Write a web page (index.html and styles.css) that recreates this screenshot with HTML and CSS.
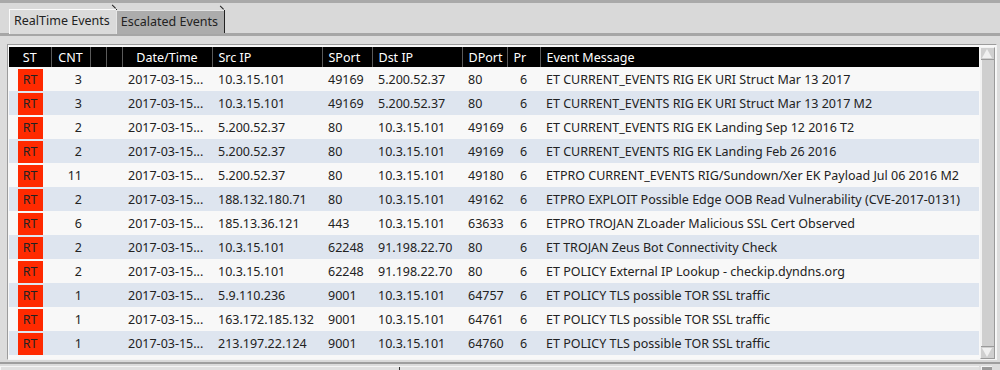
FILE: index.html
```html
<!DOCTYPE html>
<html lang="en">
<head>
  <meta charset="UTF-8">
  <title>Events</title>
  <link rel="stylesheet" href="styles.css">
</head>
<body>
  <div class="window">
    <div class="tabbar">
      <div class="tab active">RealTime Events</div>
      <div class="tab">Escalated Events</div>
    </div>
    <div class="tabline"></div>

    <div class="panel">
      <div class="frame">
        <table class="events">
          <colgroup>
            <col style="width:42px"><col style="width:39px"><col style="width:16px"><col style="width:16px">
            <col style="width:90px"><col style="width:110px"><col style="width:50px"><col style="width:90px">
            <col style="width:45px"><col style="width:33px"><col>
          </colgroup>
          <thead>
            <tr>
              <th class="c">ST</th><th class="c">CNT</th><th></th><th></th>
              <th class="c">Date/Time</th><th>Src IP</th><th>SPort</th><th>Dst IP</th>
              <th>DPort</th><th>Pr</th><th>Event Message</th>
            </tr>
          </thead>
          <tbody id="rows"></tbody>
        </table>
        <div class="vscroll">
          <div class="arrow up"></div>
          <div class="track"></div>
          <div class="arrow down"></div>
        </div>
      </div>
    </div>

    <div class="bottom">
      <div class="hbar"></div>
      <div class="grip"></div>
    </div>
  </div>

  <script>
    const events = [
      [3, "10.3.15.101", 49169, "5.200.52.37", 80, "ET CURRENT_EVENTS RIG EK URI Struct Mar 13 2017"],
      [3, "10.3.15.101", 49169, "5.200.52.37", 80, "ET CURRENT_EVENTS RIG EK URI Struct Mar 13 2017 M2"],
      [2, "5.200.52.37", 80, "10.3.15.101", 49169, "ET CURRENT_EVENTS RIG EK Landing Sep 12 2016 T2"],
      [2, "5.200.52.37", 80, "10.3.15.101", 49169, "ET CURRENT_EVENTS RIG EK Landing Feb 26 2016"],
      [11, "5.200.52.37", 80, "10.3.15.101", 49180, "ETPRO CURRENT_EVENTS RIG/Sundown/Xer EK Payload Jul 06 2016 M2"],
      [2, "188.132.180.71", 80, "10.3.15.101", 49162, "ETPRO EXPLOIT Possible Edge OOB Read Vulnerability (CVE-2017-0131)"],
      [6, "185.13.36.121", 443, "10.3.15.101", 63633, "ETPRO TROJAN ZLoader Malicious SSL Cert Observed"],
      [2, "10.3.15.101", 62248, "91.198.22.70", 80, "ET TROJAN Zeus Bot Connectivity Check"],
      [2, "10.3.15.101", 62248, "91.198.22.70", 80, "ET POLICY External IP Lookup - checkip.dyndns.org"],
      [1, "5.9.110.236", 9001, "10.3.15.101", 64757, "ET POLICY TLS possible TOR SSL traffic"],
      [1, "163.172.185.132", 9001, "10.3.15.101", 64761, "ET POLICY TLS possible TOR SSL traffic"],
      [1, "213.197.22.124", 9001, "10.3.15.101", 64760, "ET POLICY TLS possible TOR SSL traffic"]
    ];

    const tbody = document.getElementById('rows');
    events.forEach(e => {
      const tr = document.createElement('tr');
      tr.innerHTML =
        '<td class="c"><span class="badge">RT</span></td>' +
        '<td class="num">' + e[0] + '</td><td></td><td></td>' +
        '<td>2017-03-15...</td>' +
        '<td>' + e[1] + '</td><td>' + e[2] + '</td>' +
        '<td>' + e[3] + '</td><td>' + e[4] + '</td>' +
        '<td class="c">6</td><td>' + e[5] + '</td>';
      tbody.appendChild(tr);
    });
  </script>
</body>
</html>
```

FILE: styles.css
```css
body {
  margin: 0;
  background: #d9d9d9;
  font-family: 'Noto Sans', 'DejaVu Sans', sans-serif;
  font-size: 12.5px;
  color: #222;
}

.window {
  width: 1000px;
  height: 370px;
  border-top: 3px solid #a9a9a9;
  box-sizing: border-box;
  overflow: hidden;
}

.tabbar {
  display: flex;
  padding: 6px 0 0 9px;
  height: 24px;
}

.tab {
  position: relative;
  height: 23px;
  line-height: 22px;
  padding: 0 6px 0 4px;
  margin-top: 1px;
  background: #acacac;
  border-left: 1px solid #e6e6e6;
  border-top: 1px solid #e6e6e6;
  font-size: 12.5px;
  color: #222;
}

.tab.active {
  background: #dadada;
  border-top-color: #fafafa;
  border-left-color: #fafafa;
  margin-top: 0;
  height: 24px;
}

.tab::after {
  content: "";
  position: absolute;
  top: -1px;
  right: -1px;
  width: 1px;
  height: 100%;
  background: #222;
}

.tab::before {
  content: "";
  position: absolute;
  top: -2px;
  right: 0;
  width: 5px;
  height: 1px;
  background: #222;
  transform: rotate(45deg);
  transform-origin: right top;
}

.tabline {
  height: 3px;
  background: #a6a6a6;
}

.panel {
  padding: 8px 3px 0 7px;
  background: #dcdcdc;
}

.frame {
  display: flex;
  border-top: 1px solid #9c9c9c;
  border-left: 1px solid #9c9c9c;
  border-bottom: 1px solid #f4f4f4;
  border-right: 1px solid #f4f4f4;
  padding: 2px 1px 0 1px;
  background: #f8f8f8;
  box-sizing: border-box;
  height: 316px;
}

.events {
  width: 970px;
  table-layout: fixed;
  border-collapse: collapse;
  align-self: flex-start;
}

.events th {
  background: #000;
  color: #fff;
  font-weight: normal;
  height: 20px;
  padding: 0 6px;
  text-align: left;
  border-left: 1px solid #5a5a5a;
  white-space: nowrap;
  overflow: hidden;
}

.events th:first-child {
  border-left: none;
}

.events td {
  height: 24px;
  padding: 0 6px;
  white-space: nowrap;
  overflow: hidden;
}

.events .c {
  text-align: center;
}

.events td.num {
  text-align: right;
  padding-right: 8px;
}

.events td:first-child {
  padding: 0;
}

.events tbody tr:nth-child(odd) {
  background: #f8f8f8;
}

.events tbody tr:nth-child(even) {
  background: #dee5ef;
}

.badge {
  display: inline-block;
  width: 25px;
  height: 22px;
  line-height: 22px;
  margin-top: 1px;
  background: #ff2a00;
  color: #222;
  vertical-align: top;
}

.vscroll {
  width: 13px;
  margin-left: 1px;
  height: 310px;
  display: flex;
  flex-direction: column;
  background: #cfcfcf;
  border: 1px solid #9a9a9a;
  border-top-color: #f2f2f2;
  border-left-color: #f2f2f2;
}

.track {
  flex: 1;
  border-top: 1px solid #9a9a9a;
  border-bottom: 1px solid #9a9a9a;
  box-shadow: inset 1px 0 #f2f2f2;
}

.arrow {
  height: 11px;
  position: relative;
}

.arrow::after {
  content: "";
  position: absolute;
  left: 1px;
  width: 0;
  height: 0;
  border-left: 5px solid transparent;
  border-right: 5px solid transparent;
}

.arrow.up::after {
  top: 1px;
  border-bottom: 9px solid #f0f0f0;
}

.arrow.down::after {
  bottom: 1px;
  border-top: 9px solid #f0f0f0;
}

.bottom {
  display: flex;
  margin-top: 2px;
  border-top: 2px solid #9e9e9e;
  height: 8px;
  background: #dcdcdc;
  padding-top: 2px;
}

.hbar {
  width: 978px;
  border-top: 1px solid #f4f4f4;
  border-left: 1px solid #f4f4f4;
  background: #e0e0e0;
  background-image: linear-gradient(#333, #333);
  background-size: 1px 100%;
  background-position: 398px 0;
  background-repeat: no-repeat;
}

.grip {
  width: 10px;
  margin-left: 2px;
  background: #9a9a9a;
  border-top: 1px solid #f4f4f4;
  border-left: 1px solid #f4f4f4;
}
```
